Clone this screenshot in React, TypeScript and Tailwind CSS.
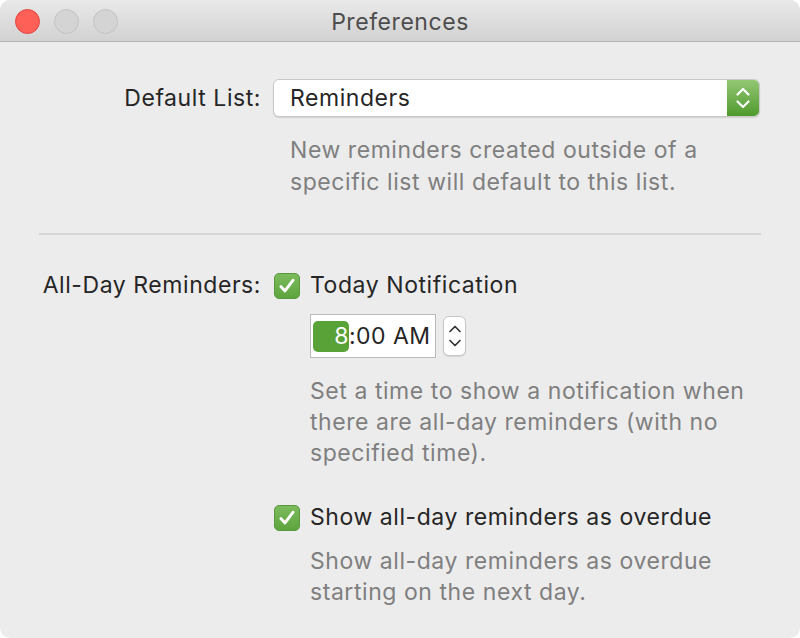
import React from "react";

function Check() {
  return (
    <div className="w-[26px] h-[26px] rounded-[5px] bg-gradient-to-b from-[#7cbb5c] to-[#5ea43f] border border-[#5a9a3d] flex items-center justify-center shrink-0">
      <svg width="20" height="20" viewBox="0 0 18 18" fill="none">
        <path d="M3.5 9.5 L7.2 13.4 L14.5 3.8" stroke="white" strokeWidth="2.6" strokeLinecap="round" strokeLinejoin="round" />
      </svg>
    </div>
  );
}

function SelectChevrons() {
  return (
    <svg width="18" height="26" viewBox="0 0 18 26" fill="none">
      <path d="M3.5 9.5 L9 4 L14.5 9.5" stroke="white" strokeWidth="2.2" strokeLinecap="round" strokeLinejoin="round" />
      <path d="M3.5 16.5 L9 22 L14.5 16.5" stroke="white" strokeWidth="2.2" strokeLinecap="round" strokeLinejoin="round" />
    </svg>
  );
}

function StepperChevrons() {
  return (
    <svg width="14" height="30" viewBox="0 0 14 30" fill="none">
      <path d="M2 10.5 L7 5.5 L12 10.5" stroke="#333" strokeWidth="1.7" strokeLinecap="round" strokeLinejoin="round" />
      <path d="M2 19.5 L7 24.5 L12 19.5" stroke="#333" strokeWidth="1.7" strokeLinecap="round" strokeLinejoin="round" />
    </svg>
  );
}

export default function App() {
  return (
    <div
      className="w-[800px] h-[638px] bg-white"
      style={{ fontFamily: "Inter, 'Noto Sans', sans-serif" }}
    >
      <div className="w-full h-full rounded-[10px] overflow-hidden bg-[#ececec] flex flex-col tracking-[0.035em]">
        <div className="h-[42px] shrink-0 bg-gradient-to-b from-[#e9e9e9] to-[#d2d2d2] border-b border-[#b3b3b3] flex items-center relative">
          <div className="flex items-center gap-[14px] pl-[15px] pt-[1px]">
            <div className="w-[25px] h-[25px] rounded-full bg-[#fe5f57] border border-[#e2463f]" />
            <div className="w-[25px] h-[25px] rounded-full bg-[#d4d4d4] border border-[#c2c2c2]" />
            <div className="w-[25px] h-[25px] rounded-full bg-[#d4d4d4] border border-[#c2c2c2]" />
          </div>
          <div className="absolute inset-0 flex items-center justify-center pt-[3px] text-[23px] text-[#4d4d4d] pointer-events-none">
            Preferences
          </div>
        </div>

        <div className="flex flex-col pt-[37px] text-[23px] leading-[33px] text-[#262626]">
          {/* Default list row */}
          <div className="flex items-center">
            <div className="w-[262px] text-right pr-[1px]">Default List:</div>
            <div className="ml-[11px] w-[487px] h-[38px] flex rounded-[6px] bg-white border border-[#c9c9c9] shadow-[0_1px_1px_rgba(0,0,0,0.12)] overflow-hidden">
              <div className="flex-1 flex items-center pl-[16px]">Reminders</div>
              <div className="w-[32px] bg-gradient-to-b from-[#93c772] to-[#4f9a2c] flex items-center justify-center">
                <SelectChevrons />
              </div>
            </div>
          </div>
          <div className="pl-[290px] pt-[17px] text-[#7f7f7f] leading-[32px]">
            New reminders created outside of a<br />
            specific list will default to this list.
          </div>

          <div className="mx-[39px] mt-[35px] h-[2px] bg-[#d6d6d6]" />

          {/* All day */}
          <div className="flex items-center mt-[34px]">
            <div className="w-[262px] text-right pr-[1px]">All-Day Reminders:</div>
            <div className="ml-[12px] flex items-center gap-[10px]">
              <Check />
              <span>Today Notification</span>
            </div>
          </div>

          <div className="flex items-center pl-[310px] mt-[12px]">
            <div className="w-[126px] h-[44px] bg-white border border-[#b9b9b9] flex items-center pl-[2px] tracking-[0.02em]">
              <div className="w-[36px] h-[31px] rounded-[5px] bg-[#58a238] text-white flex items-center justify-end">8</div>
              <span>:00 AM</span>
            </div>
            <div className="ml-[7px] w-[23px] h-[40px] rounded-[6px] bg-white border border-[#c6c6c6] shadow-[0_1px_1px_rgba(0,0,0,0.1)] flex items-center justify-center">
              <StepperChevrons />
            </div>
          </div>

          <div className="pl-[310px] pt-[18px] text-[#7f7f7f] leading-[31px]">
            Set a time to show a notification when<br />
            there are all-day reminders (with no<br />
            specified time).
          </div>

          <div className="flex items-center pl-[274px] mt-[32px] gap-[10px]">
            <Check />
            <span>Show all-day reminders as overdue</span>
          </div>
          <div className="pl-[310px] pt-[12px] text-[#7f7f7f] leading-[31px]">
            Show all-day reminders as overdue<br />
            starting on the next day.
          </div>
        </div>
      </div>
    </div>
  );
}
